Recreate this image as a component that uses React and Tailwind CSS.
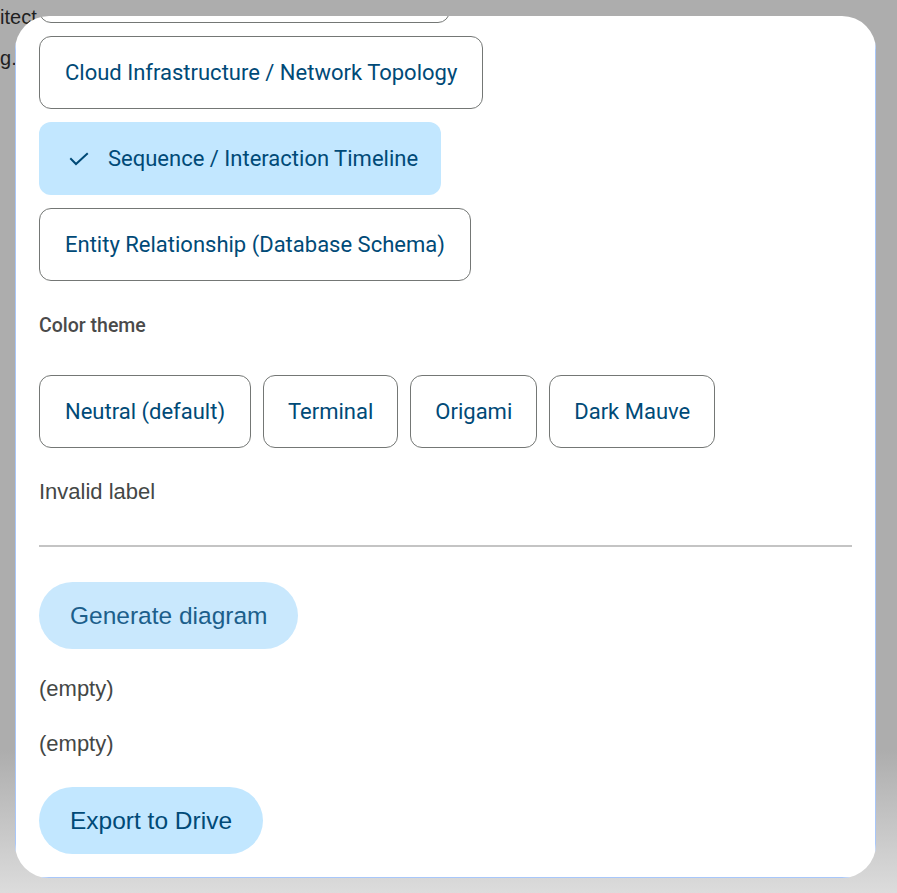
import React from 'react';

const diagramTypes = [
    { id: 'architecture', name: 'Software Architecture (Components)' },
    { id: 'cloud', name: 'Cloud Infrastructure / Network Topology' },
    { id: 'sequence', name: 'Sequence / Interaction Timeline' },
    { id: 'erd', name: 'Entity Relationship (Database Schema)' },
];

const themes = ['Neutral (default)', 'Terminal', 'Origami', 'Dark Mauve'];

const CheckMark = () => (
    <svg width="20" height="14" viewBox="0 0 20 14" fill="none" stroke="currentColor" strokeWidth="2" strokeLinecap="square">
        <polyline points="2,7 7,12 18,2" />
    </svg>
);

const App = () => {
    const selected = 'sequence';

    return (
        <div className="relative h-[893px] w-[897px] overflow-hidden bg-[linear-gradient(to_bottom,#adadad_0%,#adadad_84%,#dcdcdc_100%)] font-['Roboto',sans-serif]">
            {/* page behind the dialog */}
            <div className="absolute left-[-41px] top-[5px] whitespace-nowrap font-['Liberation_Sans',sans-serif] text-[20px] leading-[24px] text-[#1f1f1f]">
                Architect
            </div>
            <div className="absolute left-[-60px] top-[46px] whitespace-nowrap font-['Liberation_Sans',sans-serif] text-[20px] leading-[24px] text-[#1f1f1f]">
                Loading..
            </div>

            {/* dialog */}
            <div className="absolute left-[15px] top-[16px] flex h-[862px] w-[861px] flex-col overflow-hidden rounded-[34px] bg-white">
                <div className="flex h-full flex-col border-x border-b border-[#a8c7fa] px-[23px]">
                    <div className="-mt-[66px] flex flex-col">
                        <div className="flex flex-col items-start gap-[13px]">
                            {diagramTypes.map((type) =>
                                type.id === selected ? (
                                    <button
                                        key={type.id}
                                        className="flex h-[73px] items-center gap-[19px] rounded-xl bg-[#c2e7ff] pl-[30px] pr-[23px] text-[22px] leading-[26px] text-[#004a77]"
                                    >
                                        <CheckMark />
                                        <span>{type.name}</span>
                                    </button>
                                ) : (
                                    <button
                                        key={type.id}
                                        className="flex h-[73px] items-center rounded-xl border border-[#747775] px-[25px] text-[22px] leading-[26px] text-[#004a77]"
                                    >
                                        {type.name}
                                    </button>
                                )
                            )}
                        </div>

                        <div className="mt-[33px] text-[19.5px] font-medium leading-[24px] text-[#4a4a4a]">Color theme</div>

                        <div className="mt-[37px] flex gap-[12px]">
                            {themes.map((theme) => (
                                <button
                                    key={theme}
                                    className="flex h-[73px] items-center rounded-xl border border-[#747775] px-[24px] text-[22px] leading-[26px] text-[#004a77] first:px-[25px]"
                                >
                                    {theme}
                                </button>
                            ))}
                        </div>

                        <div className="mt-[30px] font-['Liberation_Sans',sans-serif] text-[22px] leading-[28px] text-[#444746]">Invalid label</div>

                        <div className="mt-[39px] h-[2px] w-full bg-[#c4c4c4]" />

                        <div className="mt-[35px]">
                            <button className="h-[67px] rounded-full bg-[#c9e8fd] px-[31px] font-['Liberation_Sans',sans-serif] text-[24.5px] leading-[28px] text-[#1c5f8b]">
                                Generate diagram
                            </button>
                        </div>

                        <div className="mt-[26px] font-['Liberation_Sans',sans-serif] text-[22px] leading-[28px] text-[#444746]">(empty)</div>
                        <div className="mt-[27px] font-['Liberation_Sans',sans-serif] text-[22px] leading-[28px] text-[#444746]">(empty)</div>

                        <div className="mt-[29px]">
                            <button className="h-[67px] rounded-full bg-[#c2e7ff] px-[31px] font-['Liberation_Sans',sans-serif] text-[24.5px] leading-[28px] text-[#004a77]">
                                Export to Drive
                            </button>
                        </div>
                    </div>
                </div>
            </div>
        </div>
    );
};

export default App;
